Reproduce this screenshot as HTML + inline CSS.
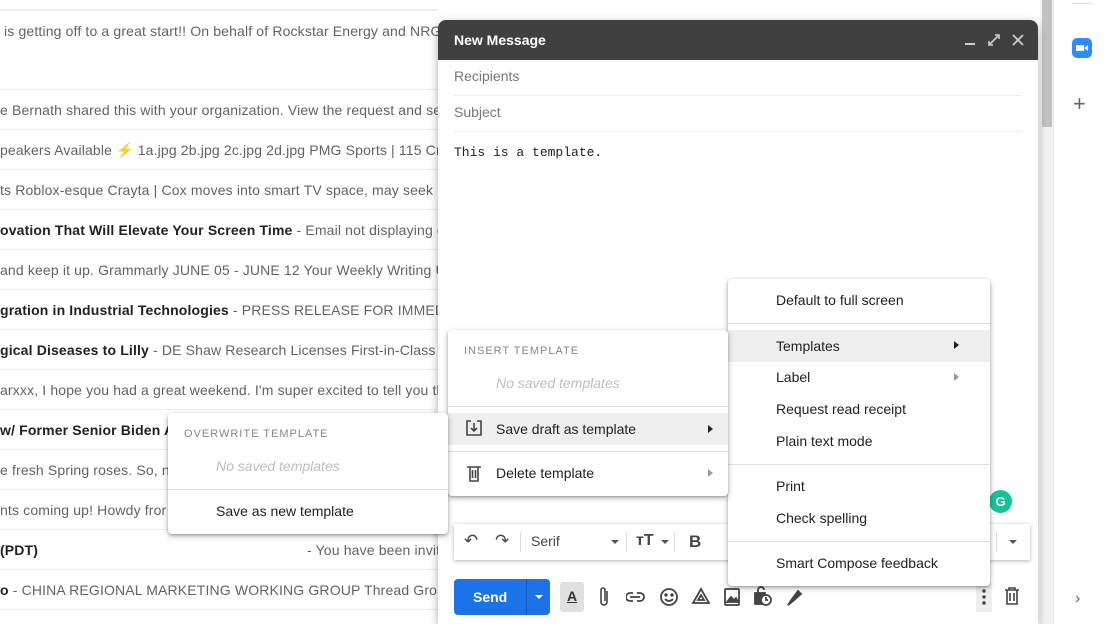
<!DOCTYPE html>
<html><head><style>
*{margin:0;padding:0;box-sizing:border-box}
body{width:1109px;height:624px;overflow:hidden;background:#fff;font-family:"Liberation Sans",Roboto,Arial,sans-serif;position:relative;color:#202124}
.row{position:absolute;left:0;width:438px;height:40px;border-bottom:1px solid #eee;font-size:14px;letter-spacing:0.15px;color:#5f6368;white-space:nowrap;overflow:hidden;line-height:40px}
.row b{color:#202124}
.abs{position:absolute}
.menu{position:absolute;background:#fff;border-radius:4px;box-shadow:0 2px 6px rgba(0,0,0,.3),0 1px 2px rgba(0,0,0,.2);font-size:14px;color:#202124}
.mi{position:absolute;left:0;right:0;height:32px;line-height:32px}
.hl{background:#eee}
.div{position:absolute;left:0;right:0;border-top:1px solid #e0e0e0}
.hdr{position:absolute;font-size:11px;letter-spacing:1px;color:#80868b}
.ns{position:absolute;font-style:italic;color:#bdbdbd;font-size:14px}
.arr{position:absolute;width:0;height:0;border-left:5px solid #202124;border-top:4px solid transparent;border-bottom:4px solid transparent}
.arr.g{border-left-color:#999}
</style></head><body>
<div class="row" style="top:-30px"></div>
<div class="row" style="top:10px;height:80px;line-height:40px;border-top:1px solid #eee">&nbsp;is getting off to a great start!! On behalf of Rockstar Energy and NRG</div>
<div class="row" style="top:90px">e Bernath shared this with your organization. View the request and se</div>
<div class="row" style="top:130px">peakers Available <span style="color:#f5b400">⚡</span> 1a.jpg 2b.jpg 2c.jpg 2d.jpg PMG Sports | 115 Cr</div>
<div class="row" style="top:170px">ts Roblox-esque Crayta | Cox moves into smart TV space, may seek p</div>
<div class="row" style="top:210px"><b>ovation That Will Elevate Your Screen Time</b> - Email not displaying cor</div>
<div class="row" style="top:250px">and keep it up. Grammarly JUNE 05 - JUNE 12 Your Weekly Writing Up</div>
<div class="row" style="top:290px"><b>gration in Industrial Technologies</b> - PRESS RELEASE FOR IMMEDIATE</div>
<div class="row" style="top:330px"><b>gical Diseases to Lilly</b> - DE Shaw Research Licenses First-in-Class The</div>
<div class="row" style="top:370px">arxxx, I hope you had a great weekend. I'm super excited to tell you th</div>
<div class="row" style="top:410px"><b>w/ Former Senior Biden Ad</b></div>
<div class="row" style="top:450px">e fresh Spring roses. So, n</div>
<div class="row" style="top:490px">nts coming up! Howdy fror</div>
<div class="row" style="top:530px"><b>(PDT)</b><span style="position:absolute;left:307px">- You have been invit</span></div>
<div class="row" style="top:570px"><b>o</b> - CHINA REGIONAL MARKETING WORKING GROUP Thread Group is</div>

<!-- scrollbar & side -->
<div class="abs" style="left:1040px;top:0;width:13px;height:624px;background:#f1f1f1"></div>
<div class="abs" style="left:1042px;top:0;width:10px;height:127px;background:#c1c1c1"></div>
<div class="abs" style="left:1053px;top:0;width:1px;height:624px;background:#e8e8e8"></div>
<div class="abs" style="left:1072px;top:0;width:20px;height:4px;border-bottom:1px solid #ddd"></div>
<div class="abs" style="left:1072px;top:38px;width:20px;height:20px;background:#2d8cff;border-radius:5px"><svg width="20" height="20"><rect x="4" y="7" width="8" height="6" rx="1" fill="#fff"/><path d="M12 10l4-3v6z" fill="#fff"/></svg></div>
<div class="abs" style="left:1073px;top:91px;font-size:22px;color:#666">+</div>
<div class="abs" style="left:1075px;top:590px;font-size:16px;color:#666">›</div>

<!-- compose -->
<div class="abs" style="left:438px;top:20px;width:600px;height:604px;background:#fff;box-shadow:0 8px 10px rgba(0,0,0,.2),0 0 8px rgba(0,0,0,.15);border-radius:8px 8px 0 0">
 <div style="height:40px;background:#404040;border-radius:8px 8px 0 0;color:#fff;font-weight:bold;font-size:14px;line-height:40px;padding-left:16px">New Message
  <span class="abs" style="left:527px;top:23px;width:10px;height:2px;background:#ccc"></span>
  <svg class="abs" style="left:549px;top:13px" width="14" height="14"><path d="M2 12L12 2M8 2h4v4M2 8v4h4" stroke="#ccc" stroke-width="1.6" fill="none"/></svg>
  <svg class="abs" style="left:574px;top:14px" width="12" height="12"><path d="M1 1L11 11M11 1L1 11" stroke="#ccc" stroke-width="1.8"/></svg>
 </div>
 <div class="abs" style="left:16px;top:48px;font-size:14px;color:#777">Recipients</div>
 <div class="abs" style="left:16px;top:75px;width:568px;border-top:1px solid #eee"></div>
 <div class="abs" style="left:16px;top:84px;font-size:14px;color:#777">Subject</div>
 <div class="abs" style="left:16px;top:111px;width:568px;border-top:1px solid #eee"></div>
 <div class="abs" style="left:16px;top:125px;font-family:'Liberation Mono',monospace;font-size:13px;color:#222">This is a template.</div>
 <!-- toolbar -->
 <div class="abs" style="left:16px;top:504px;width:576px;height:36px;box-shadow:0 1px 4px rgba(0,0,0,.3);background:#fff;font-size:14px;color:#444">
  <span class="abs" style="left:10px;top:7px;font-size:17px">↶</span>
  <span class="abs" style="left:41px;top:7px;font-size:17px">↷</span>
  <span class="abs" style="left:66px;top:8px;height:20px;border-left:1px solid #ddd"></span>
  <span class="abs" style="left:77px;top:9px">Serif</span>
  <span class="abs" style="left:157px;top:16px;border:4px solid transparent;border-top-color:#555"></span>
  <span class="abs" style="left:172px;top:8px;height:20px;border-left:1px solid #ddd"></span>
  <span class="abs" style="left:182px;top:8px;font-weight:bold;font-size:16px">тT</span>
  <span class="abs" style="left:207px;top:16px;border:4px solid transparent;border-top-color:#555"></span>
  <span class="abs" style="left:220px;top:8px;height:20px;border-left:1px solid #ddd"></span>
  <span class="abs" style="left:235px;top:8px;font-weight:bold;font-size:17px">B</span>
  <span class="abs" style="left:542px;top:8px;height:20px;border-left:1px solid #ddd"></span>
  <span class="abs" style="left:555px;top:16px;border:4px solid transparent;border-top-color:#555"></span>
 </div>
 <div class="abs" style="left:551px;top:470px;width:23px;height:23px;border-radius:50%;background:#15c39a;color:#fff;font-size:13px;text-align:center;line-height:23px;font-weight:bold">G</div>
 <!-- send -->
 <div class="abs" style="left:16px;top:559px;width:96px;height:36px;background:#1a73e8;border-radius:4px;color:#fff;font-weight:bold;font-size:14px;line-height:36px">
  <span style="padding-left:19px">Send</span>
  <span class="abs" style="left:72px;top:0;height:36px;border-left:1px solid #1557b0"></span>
  <span class="abs" style="left:81px;top:16px;border:4px solid transparent;border-top-color:#fff"></span>
 </div>
 <div class="abs" style="left:122px;top:562px;width:24px;height:30px;background:#e0e0e0;border-radius:3px;text-align:center;font-weight:bold;font-size:14px;line-height:28px;text-decoration:underline;color:#333">A</div>
 <svg class="abs" style="left:160px;top:566px" width="12" height="22" fill="none" stroke="#444" stroke-width="1.6"><path d="M9 5v11a3 3 0 01-6 0V4a2 2 0 014 0v11"/></svg>
 <svg class="abs" style="left:188px;top:566px" width="200" height="22" fill="none" stroke="#444" stroke-width="1.8">
  <path d="M4 11h10M7 7H4a4 4 0 000 8h3M11 7h3a4 4 0 010 8h-3"/>
  <circle cx="43" cy="11" r="8"/><circle cx="40" cy="9" r=".8" fill="#444"/><circle cx="46" cy="9" r=".8" fill="#444"/><path d="M39 13q4 4 8 0"/>
  <path d="M75 3l8 14H67z"/><path d="M75 9l3 5h-6z"/>
  <rect x="99" y="3" width="14" height="16" rx="1"/><path d="M101 16l4-5 3 3 2-2 2 4z" fill="#444"/>
  <path d="M132 7v-3a3 3 0 016 0" /><rect x="129" y="7" width="10" height="11" fill="#444"/><circle cx="140" cy="14" r="5" fill="#fff"/><path d="M140 11v3h2"/>
  <path d="M162 19l4-6 6-8 3 3-8 7z" fill="#444"/>
 </svg>
 <div class="abs" style="left:538px;top:562px;width:16px;height:30px;background:#eee;border-radius:3px"><svg width="16" height="30"><circle cx="8" cy="9" r="1.7" fill="#444"/><circle cx="8" cy="15" r="1.7" fill="#444"/><circle cx="8" cy="21" r="1.7" fill="#444"/></svg></div>
 <svg class="abs" style="left:566px;top:567px" width="16" height="18" fill="none" stroke="#444" stroke-width="1.6"><path d="M1 3h14M5 3V1h6v2M3 3v14h10V3M6 6v8M10 6v8"/></svg>
</div>

<!-- right more menu -->
<div class="menu" style="left:728px;top:279px;width:262px;height:307px">
 <div class="mi" style="top:5px;padding-left:48px">Default to full screen</div>
 <div class="div" style="top:44px"></div>
 <div class="mi hl" style="top:51px;height:32px;padding-left:48px">Templates</div><div class="arr" style="left:226px;top:62px"></div>
 <div class="mi" style="top:82px;padding-left:48px">Label</div><div class="arr g" style="left:226px;top:94px"></div>
 <div class="mi" style="top:114px;padding-left:48px">Request read receipt</div>
 <div class="mi" style="top:146px;padding-left:48px">Plain text mode</div>
 <div class="div" style="top:185px"></div>
 <div class="mi" style="top:191px;padding-left:48px">Print</div>
 <div class="mi" style="top:223px;padding-left:48px">Check spelling</div>
 <div class="div" style="top:262px"></div>
 <div class="mi" style="top:268px;padding-left:48px">Smart Compose feedback</div>
</div>

<!-- templates menu -->
<div class="menu" style="left:448px;top:330px;width:280px;height:166px">
 <div class="hdr" style="left:16px;top:15px">INSERT TEMPLATE</div>
 <div class="ns" style="left:48px;top:45px">No saved templates</div>
 <div class="div" style="top:76px"></div>
 <div class="mi hl" style="top:83px;padding-left:48px">Save draft as template</div>
 <svg class="abs" style="left:18px;top:90px" width="16" height="16" fill="none" stroke="#444" stroke-width="1.6"><path d="M5 1H1v14h14V1h-4M8 3v8M5 8l3 3 3-3"/></svg>
 <div class="arr" style="left:260px;top:95px"></div>
 <div class="div" style="top:121px"></div>
 <div class="mi" style="top:127px;padding-left:48px">Delete template</div>
 <svg class="abs" style="left:19px;top:134px" width="14" height="18" fill="none" stroke="#444" stroke-width="1.6"><path d="M0 3h14M3 3v14h8V3M5.5 6v8M8.5 6v8"/></svg>
 <div class="arr g" style="left:260px;top:139px"></div>
</div>

<!-- overwrite menu -->
<div class="menu" style="left:168px;top:413px;width:280px;height:121px">
 <div class="hdr" style="left:16px;top:15px">OVERWRITE TEMPLATE</div>
 <div class="ns" style="left:48px;top:45px">No saved templates</div>
 <div class="div" style="top:76px"></div>
 <div class="mi" style="top:82px;padding-left:48px">Save as new template</div>
</div>
</body></html>
